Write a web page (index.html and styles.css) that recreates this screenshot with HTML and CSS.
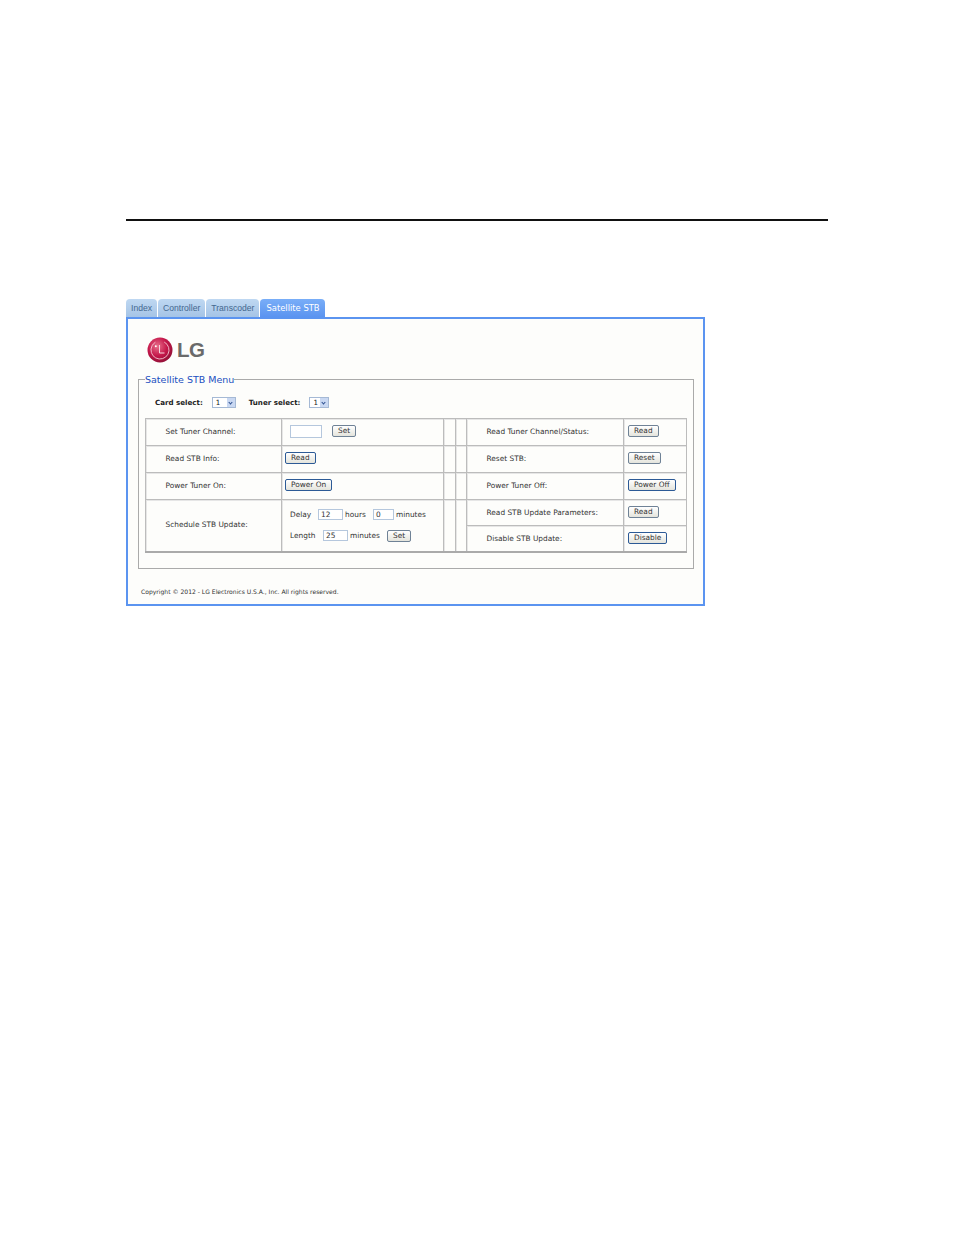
FILE: index.html
```html
<!DOCTYPE html>
<html lang="en">

<head>
    <meta charset="UTF-8">
    <title>Satellite STB Menu</title>
    <link rel="stylesheet" href="styles.css">
</head>

<body>
    <div class="rule"></div>
    <div class="app">
        <div class="tabs">
            <a class="tab">Index</a>
            <a class="tab">Controller</a>
            <a class="tab">Transcoder</a>
            <a class="tab active">Satellite STB</a>
        </div>
        <div class="panel">
            <div class="logo">
                <svg width="26" height="26" viewBox="0 0 26 26">
                    <defs>
                        <radialGradient id="lgRed" cx="40%" cy="35%" r="70%">
                            <stop offset="0" stop-color="#e8708c"/>
                            <stop offset="0.55" stop-color="#c5174a"/>
                            <stop offset="1" stop-color="#8e0f35"/>
                        </radialGradient>
                    </defs>
                    <circle cx="13" cy="13" r="12.5" fill="url(#lgRed)"/>
                    <circle cx="13" cy="13" r="9" fill="none" stroke="#f6c8d4" stroke-width="0.8" stroke-dasharray="47 10" transform="rotate(-62 13 13)"/>
                    <path d="M12.5 8v8h5" fill="none" stroke="#f6d4dc" stroke-width="1"/>
                    <circle cx="8.8" cy="9.2" r="1" fill="#fff"/>
                </svg>
                <span class="logo-text">LG</span>
            </div>
            <fieldset class="menu">
                <legend>Satellite STB Menu</legend>
                <div class="selects">
                    <label>Card select:</label>
                    <span class="select">1<i class="arrow"></i></span>
                    <label class="second">Tuner select:</label>
                    <span class="select small">1<i class="arrow"></i></span>
                </div>
                <table class="grid">
                    <colgroup>
                        <col class="c1"><col class="c2"><col class="c3"><col class="c4"><col class="c5"><col class="c6">
                    </colgroup>
                    <tr class="row">
                        <td class="name">Set Tuner Channel:</td>
                        <td class="ctl wide"><span class="input blank"></span><button>Set</button></td>
                        <td></td><td></td>
                        <td class="name">Read Tuner Channel/Status:</td>
                        <td class="ctl"><button>Read</button></td>
                    </tr>
                    <tr class="row">
                        <td class="name">Read STB Info:</td>
                        <td class="ctl left"><button class="dark">Read</button></td>
                        <td></td><td></td>
                        <td class="name">Reset STB:</td>
                        <td class="ctl"><button>Reset</button></td>
                    </tr>
                    <tr class="row">
                        <td class="name">Power Tuner On:</td>
                        <td class="ctl left"><button class="dark">Power On</button></td>
                        <td></td><td></td>
                        <td class="name">Power Tuner Off:</td>
                        <td class="ctl"><button class="dark">Power Off</button></td>
                    </tr>
                    <tr class="row short">
                        <td class="name" rowspan="2">Schedule STB Update:</td>
                        <td class="sched" rowspan="2">
                            <div class="line"><span class="lbl-delay">Delay</span><span class="input w25">12</span><span class="lbl-hours">hours</span><span class="input w21">0</span><span>minutes</span></div>
                            <div class="line"><span class="lbl-length">Length</span><span class="input w25">25</span><span class="lbl-min">minutes</span><button>Set</button></div>
                        </td>
                        <td rowspan="2"></td><td rowspan="2"></td>
                        <td class="name">Read STB Update Parameters:</td>
                        <td class="ctl"><button>Read</button></td>
                    </tr>
                    <tr class="row short">
                        <td class="name low">Disable STB Update:</td>
                        <td class="ctl low"><button class="dark">Disable</button></td>
                    </tr>
                </table>
            </fieldset>
            <p class="copyright">Copyright © 2012 - LG Electronics U.S.A., Inc. All rights reserved.</p>
        </div>
    </div>
</body>

</html>
```

FILE: styles.css
```css
body {
    margin: 0;
    padding: 219px 126px 0;
    background: #fff;
    color: #333;
    font-family: "DejaVu Sans", Verdana, sans-serif;
    font-size: 7.4px;
}

.rule {
    width: 702px;
    height: 2px;
    background: #111;
}

.app {
    width: 579px;
    margin-top: 78px;
}

.tabs {
    display: flex;
    gap: 1px;
    height: 18px;
}

.tab {
    padding: 0 5px;
    line-height: 19px;
    border-radius: 4px 4px 0 0;
    background: linear-gradient(#bfd8f2, #a5c4e6);
    color: #44688f;
    font-family: "Liberation Sans", Arial, sans-serif;
    font-size: 8.6px;
}

.tab.active {
    padding: 0 5px 0 6px;
    background: linear-gradient(#79aef8, #5b94f0);
    color: #fff;
    font-family: "DejaVu Sans", Verdana, sans-serif;
    font-size: 8.4px;
}

.panel {
    box-sizing: border-box;
    height: 289px;
    padding: 18px 10px 0;
    border: 2px solid #5b94f0;
    background: #fdfdfb;
}

.logo {
    display: flex;
    align-items: center;
    gap: 4px;
    height: 26px;
    padding-left: 9px;
}

.logo-text {
    color: #6a6a6a;
    font-family: "Liberation Sans", Arial, sans-serif;
    font-size: 20.5px;
    font-weight: bold;
    letter-spacing: -0.5px;
}

.menu {
    box-sizing: border-box;
    width: 556px;
    height: 197px;
    margin: 9px 0 0;
    padding: 10px 6px 0;
    border: 1px solid #aaa;
}

.menu legend {
    padding: 2px 0 0;
    color: #1a4fc0;
    font-size: 9.5px;
    line-height: 12px;
}

.selects {
    display: flex;
    align-items: center;
    height: 12px;
    padding-left: 10px;
    margin-bottom: 10px;
    color: #222;
    font-weight: bold;
    font-size: 7.1px;
}

.selects label {
    margin-right: 9px;
}

.selects .second {
    margin-left: 13px;
}

.select {
    box-sizing: border-box;
    position: relative;
    width: 24px;
    height: 11px;
    padding-left: 3px;
    border: 1px solid #a5b9d5;
    background: #fff;
    font-weight: normal;
    line-height: 9px;
}

.select.small {
    width: 20px;
}

.arrow {
    position: absolute;
    top: 0;
    right: 0;
    width: 8px;
    height: 9px;
    background: #c9d8f2;
}

.arrow::after {
    content: "";
    position: absolute;
    top: 3px;
    left: 2px;
    width: 2px;
    height: 2px;
    border-right: 1px solid #2c4f8f;
    border-bottom: 1px solid #2c4f8f;
    transform: rotate(45deg);
}

.grid {
    width: 542px;
    table-layout: fixed;
    border-collapse: collapse;
    border: 1px solid #aaa;
    border-bottom-width: 2px;
}

.c1 { width: 136px; }
.c2 { width: 162px; }
.c3 { width: 12px; }
.c4 { width: 11px; }
.c5 { width: 157px; }

.grid td {
    padding: 0;
    border: 1px solid #bcbcbc;
    box-shadow: inset 1px 1px 0 #e6e6e6;
}

.row {
    height: 27px;
}

.row.short {
    height: 26px;
}

.grid .name {
    padding: 0 0 1px 19.5px;
}

.grid .ctl {
    padding: 0 0 2px 4px;
}

.grid .ctl.left {
    padding-left: 3px;
}

.grid .ctl.wide {
    padding-left: 8px;
}

.grid .sched {
    padding-left: 8px;
}

.grid .name.low {
    padding-bottom: 0;
}

.grid .ctl.low {
    padding-bottom: 0;
}

.line {
    display: flex;
    align-items: center;
    height: 21px;
}

.lbl-delay { width: 28px; }
.lbl-hours { width: 28px; margin-left: 2px; }
.lbl-length { width: 33px; }
.lbl-min { width: 37px; margin-left: 2px; }

.input {
    display: inline-block;
    box-sizing: border-box;
    height: 11px;
    padding-left: 2px;
    border: 1px solid #b5c7dd;
    background: #fff;
    line-height: 9px;
}

.input.blank {
    width: 32px;
    height: 13px;
    margin-right: 10px;
    vertical-align: middle;
}

.w25 { width: 25px; }
.w21 { width: 21px; margin-right: 2px; }

button {
    height: 12px;
    padding: 0 5px;
    border: 1px solid #6f8296;
    border-radius: 2px;
    background: linear-gradient(#fff, #e4e4dc);
    color: #333;
    font-family: "DejaVu Sans", Verdana, sans-serif;
    font-size: 7.4px;
    line-height: 10px;
    vertical-align: middle;
}

button.dark {
    border-color: #2c5a96;
}

.copyright {
    margin: 19px 0 0 3px;
    color: #333;
    font-size: 6.05px;
}
```
